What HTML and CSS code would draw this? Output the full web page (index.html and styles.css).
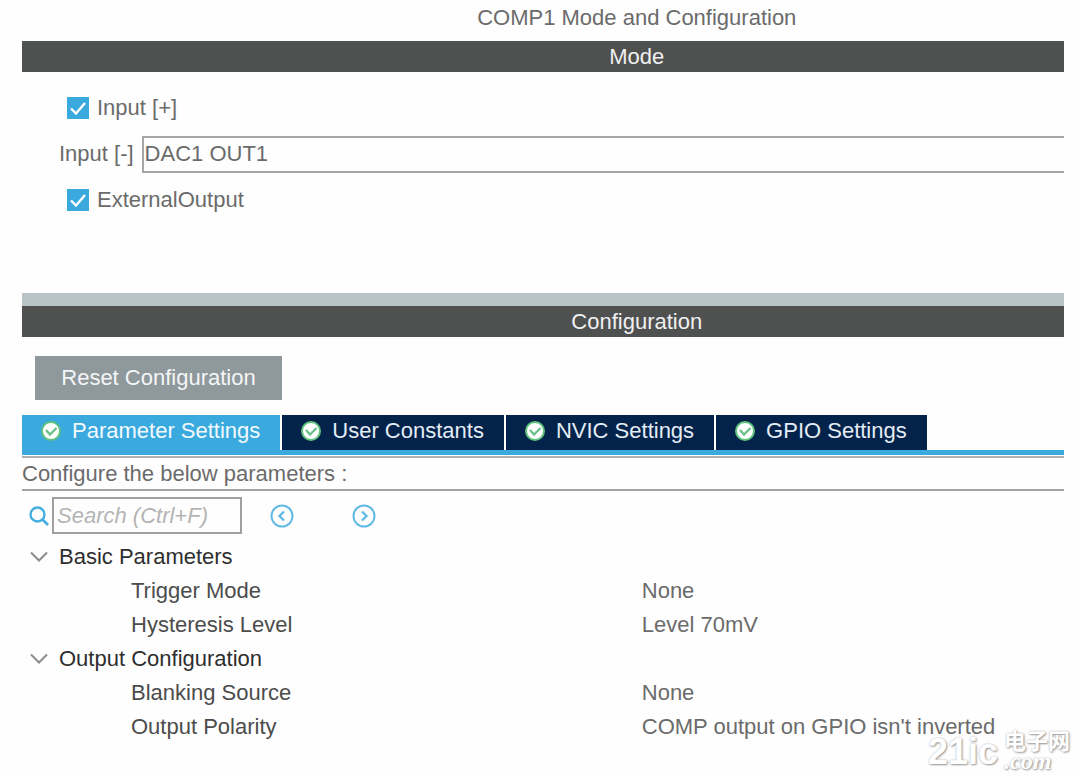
FILE: index.html
```html
<!DOCTYPE html>
<html lang="en">

<head>
  <meta charset="UTF-8">
  <meta name="viewport" content="width=device-width, initial-scale=1.0">
  <title>COMP1 Mode and Configuration</title>
  <link rel="stylesheet" href="styles.css">
</head>

<body>
  <svg width="0" height="0" class="sprite" aria-hidden="true">
    <symbol id="ok" viewBox="0 0 20 20">
      <circle cx="10" cy="10" r="9" fill="#fff" stroke="#5fc27e" stroke-width="2" />
      <path d="M5 9l4 4.500 6.500-6.500" fill="none" stroke="#6cc08a" stroke-width="2.400" />
    </symbol>
    <symbol id="chevron" viewBox="0 0 18 12">
      <path d="M1 1.5l8 8 8-8" fill="none" stroke="#8c8c8c" stroke-width="2" />
    </symbol>
  </svg>

  <main class="panel">
    <div class="pane">
      <h1>COMP1 Mode and Configuration</h1>

      <h2 class="bar">Mode</h2>
      <section class="mode">
        <div class="row check-row">
          <input type="checkbox" id="input-plus" checked>
          <label for="input-plus">Input [+]</label>
        </div>
        <div class="row">
          <label for="input-minus">Input [-]</label>
          <select id="input-minus">
            <option>DAC1 OUT1</option>
          </select>
        </div>
        <div class="row check-row">
          <input type="checkbox" id="ext-output" checked>
          <label for="ext-output">ExternalOutput</label>
        </div>
      </section>

      <div class="splitter"></div>

      <h2 class="bar">Configuration</h2>
      <section class="config">
        <button type="button" class="reset">Reset Configuration</button>

        <nav class="tabs">
          <button type="button" class="tab active"><svg class="ok"><use href="#ok" /></svg>Parameter Settings</button>
          <button type="button" class="tab"><svg class="ok"><use href="#ok" /></svg>User Constants</button>
          <button type="button" class="tab"><svg class="ok"><use href="#ok" /></svg>NVIC Settings</button>
          <button type="button" class="tab"><svg class="ok"><use href="#ok" /></svg>GPIO Settings</button>
        </nav>

        <p class="hint">Configure the below parameters :</p>

        <div class="search">
          <label for="search" aria-label="Search">
            <svg width="20" height="20" viewBox="0 0 20 20">
              <circle cx="8.5" cy="8.5" r="7" fill="none" stroke="#45aede" stroke-width="2.4" />
              <path d="M13.5 13.5l5.5 5.5" stroke="#45aede" stroke-width="2.6" />
            </svg>
          </label>
          <input type="text" id="search" placeholder="Search (Ctrl+F)">
          <button type="button" class="step" aria-label="Previous">
            <svg width="24" height="24" viewBox="0 0 24 24" fill="none" stroke="#63b9e3">
              <circle cx="12" cy="12" r="10.5" stroke-width="2" />
              <path d="M14 7.5L9.5 12l4.5 4.5" stroke-width="2.4" />
            </svg>
          </button>
          <button type="button" class="step" aria-label="Next">
            <svg width="24" height="24" viewBox="0 0 24 24" fill="none" stroke="#63b9e3">
              <circle cx="12" cy="12" r="10.5" stroke-width="2" />
              <path d="M10 7.5l4.5 4.5-4.5 4.5" stroke-width="2.4" />
            </svg>
          </button>
        </div>

        <table class="params">
          <tbody>
            <tr>
              <th colspan="2"><svg class="chevron"><use href="#chevron" /></svg>Basic Parameters</th>
            </tr>
            <tr>
              <td class="name">Trigger Mode</td>
              <td>None</td>
            </tr>
            <tr>
              <td class="name">Hysteresis Level</td>
              <td>Level 70mV</td>
            </tr>
          </tbody>
          <tbody>
            <tr>
              <th colspan="2"><svg class="chevron"><use href="#chevron" /></svg>Output Configuration</th>
            </tr>
            <tr>
              <td class="name">Blanking Source</td>
              <td>None</td>
            </tr>
            <tr>
              <td class="name">Output Polarity</td>
              <td>COMP output on GPIO isn't inverted</td>
            </tr>
          </tbody>
        </table>
      </section>
    </div>
  </main>

  <div class="watermark">
    <span class="wm-name">21ic</span>
    <span class="wm-side">
      <span class="wm-cn">电子网</span>
      <span class="wm-com">.com</span>
    </span>
  </div>
</body>

</html>
```

FILE: styles.css
```css
* {
  box-sizing: border-box;
}

body {
  margin: 0;
  font-family: "Liberation Sans", Arial, sans-serif;
  font-size: 22px;
  line-height: 30px;
  color: #6b6b6b;
  background-color: #fefefe;
}

button, input, select {
  font: inherit;
  margin: 0;
}

button {
  border: none;
  padding: 0;
  background: none;
}

.sprite {
  position: absolute;
}

.panel {
  margin: 0 16px 0 22px;
  overflow: hidden;
}

/* content is wider than the visible panel and runs off to the right */
.pane {
  width: 118%;
}

h1, h2 {
  margin: 0;
  font-size: 22px;
  font-weight: normal;
  text-align: center;
}

h1 {
  padding: 3px 0 8px;
}

.bar {
  padding-top: 1px;
  color: #f0f0f0;
  background-color: #4f5150;
}

/* Mode */
.mode {
  padding: 13px 0 70px 37px;
}

.row {
  display: flex;
  align-items: center;
  height: 46px;
  gap: 8px;
}

.check-row {
  padding-left: 8px;
}

.row input {
  appearance: none;
  width: 22px;
  height: 22px;
  background-color: #3aa9de;
  background-image: url("data:image/svg+xml,%3Csvg xmlns='http://www.w3.org/2000/svg' viewBox='0 0 22 22'%3E%3Cpath d='M4 11.5l5 5L18 6' fill='none' stroke='white' stroke-width='2.4'/%3E%3C/svg%3E");
}

.row select {
  flex: 1;
  height: 37px;
  padding: 0 1px;
  appearance: none;
  border: 2px solid #a6a6a6;
  border-radius: 0;
  color: #6b6b6b;
  background-color: #fefefe;
}

.splitter {
  height: 13px;
  background-color: #b8c4c6;
}

/* Configuration */
.reset {
  display: block;
  width: 247px;
  height: 44px;
  margin: 19px 0 15px 13px;
  color: #f4f6f7;
  background-color: #8f989b;
}

.tabs {
  display: flex;
  align-items: flex-start;
  gap: 2px;
  height: 40px;
  background: linear-gradient(#3aa9de, #3aa9de) bottom / 100% 5px no-repeat;
}

.tab {
  display: flex;
  align-items: center;
  gap: 11px;
  height: 35px;
  padding: 0 20px 3px 19px;
  color: #e4ecf4;
  background-color: #03234b;
}

.tab.active {
  color: #f2f9fd;
  background-color: #3aa9de;
}

.ok {
  width: 20px;
  height: 20px;
}

.hint {
  margin: 1px 0 0;
  padding-top: 1px;
  border-top: 2px solid #adb1b3;
  border-bottom: 2px solid #a3a3a3;
}

.search {
  display: flex;
  align-items: center;
  height: 49px;
  padding-left: 7px;
}

.search label {
  display: flex;
}

.search input {
  width: 190px;
  height: 37px;
  margin: 0 28px 0 3px;
  padding: 0 3px;
  border: 2px solid #a0a0a0;
  background-color: #fefefe;
}

.search input::placeholder {
  color: #b4b4b4;
  font-style: italic;
  opacity: 1;
}

.step {
  display: flex;
  margin-right: 58px;
}

.params {
  width: 100%;
  border-collapse: collapse;
  table-layout: fixed;
}

.params th, .params td {
  height: 34px;
  padding: 0;
  text-align: left;
  font-weight: normal;
}

.params th {
  color: #2e2e2e;
}

.params .name {
  padding-left: 109px;
  color: #4c4c4c;
}

.params td + td {
  padding-left: 5px;
}

.chevron {
  width: 18px;
  height: 12px;
  margin: 0 11px 2px 8px;
  vertical-align: middle;
}

/* Watermark */
.watermark {
  position: absolute;
  right: 10px;
  bottom: 2px;
  display: flex;
  align-items: flex-end;
  gap: 6px;
  color: #fff;
  text-shadow: 1px 1px 2px #999, 0 0 2px #bbb;
}

.wm-name {
  font-size: 36px;
  font-weight: bold;
  line-height: 42px;
}

.wm-side {
  display: flex;
  flex-direction: column;
}

.wm-cn {
  font-family: "Noto Sans CJK SC", sans-serif;
  font-size: 22px;
  font-weight: bold;
  line-height: 20px;
}

.wm-com {
  font-family: "Liberation Serif", serif;
  font-size: 24px;
  font-style: italic;
  font-weight: bold;
  line-height: 24px;
}
```
